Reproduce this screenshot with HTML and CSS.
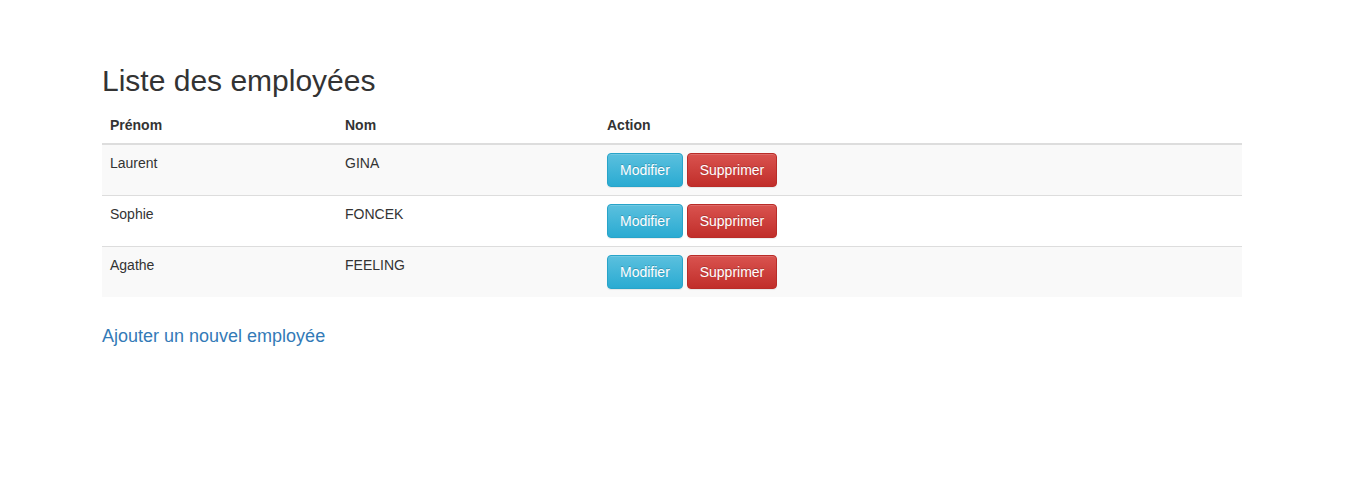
FILE: index.html
```html
<!DOCTYPE html>
<html lang="fr">
<head>
<meta charset="utf-8">
<title>Liste des employées</title>
<link rel="stylesheet" href="styles.css">
</head>
<body>
<div class="container">
  <h2 class="title">Liste des employées</h2>
  <table class="table">
    <thead>
      <tr><th class="c1">Prénom</th><th class="c2">Nom</th><th>Action</th></tr>
    </thead>
    <tbody>
      <tr class="odd"><td>Laurent</td><td>GINA</td><td><a class="btn btn-info">Modifier</a> <a class="btn btn-danger">Supprimer</a></td></tr>
      <tr><td>Sophie</td><td>FONCEK</td><td><a class="btn btn-info">Modifier</a> <a class="btn btn-danger">Supprimer</a></td></tr>
      <tr class="odd"><td>Agathe</td><td>FEELING</td><td><a class="btn btn-info">Modifier</a> <a class="btn btn-danger">Supprimer</a></td></tr>
    </tbody>
  </table>
  <p class="add"><a href="#" class="add-link">Ajouter un nouvel employée</a></p>
</div>
</body>
</html>
```
FILE: styles.css
```css
* { box-sizing: border-box; }
html, body { margin: 0; padding: 0; }
body {
  font-family: "Liberation Sans", Arial, sans-serif;
  font-size: 14px;
  line-height: 1.42857143;
  color: #333;
  background: #fff;
}
.container {
  width: 1140px;
  margin-left: 102px;
  padding-top: 44px;
}
.title {
  font-size: 30px;
  font-weight: 500;
  line-height: 1.1;
  margin: 20px 0 10px;
}
.table {
  width: 100%;
  border-collapse: collapse;
  border-spacing: 0;
  margin-bottom: 20px;
}
.table th {
  text-align: left;
  font-weight: bold;
  padding: 8px;
  line-height: 20px;
  vertical-align: bottom;
  border-bottom: 2px solid #ddd;
}
.table .c1 { width: 235px; }
.table .c2 { width: 262px; }
.table td {
  padding: 8px;
  line-height: 20px;
  vertical-align: top;
  border-top: 1px solid #ddd;
}
.table thead + tbody tr:first-child td { border-top: 0; }
.table tr.odd td { background: #f9f9f9; }
.btn {
  display: inline-block;
  padding: 6px 12px;
  font-size: 14px;
  line-height: 20px;
  border: 1px solid transparent;
  border-radius: 4px;
  color: #fff;
  text-shadow: 0 -1px 0 rgba(0,0,0,.2);
  box-shadow: inset 0 1px 0 rgba(255,255,255,.15), 0 1px 1px rgba(0,0,0,.075);
  cursor: pointer;
  vertical-align: middle;
}
.btn-info {
  background-image: linear-gradient(to bottom, #5bc0de 0, #2aabd2 100%);
  border-color: #28a4c9;
}
.btn-danger {
  background-image: linear-gradient(to bottom, #d9534f 0, #c12e2a 100%);
  border-color: #b92c28;
}
.add {
  margin: 0;
  padding-top: 7px;
  font-size: 18px;
  line-height: 1.42857143;
}
.add-link {
  color: #337ab7;
  text-decoration: none;
}
```
